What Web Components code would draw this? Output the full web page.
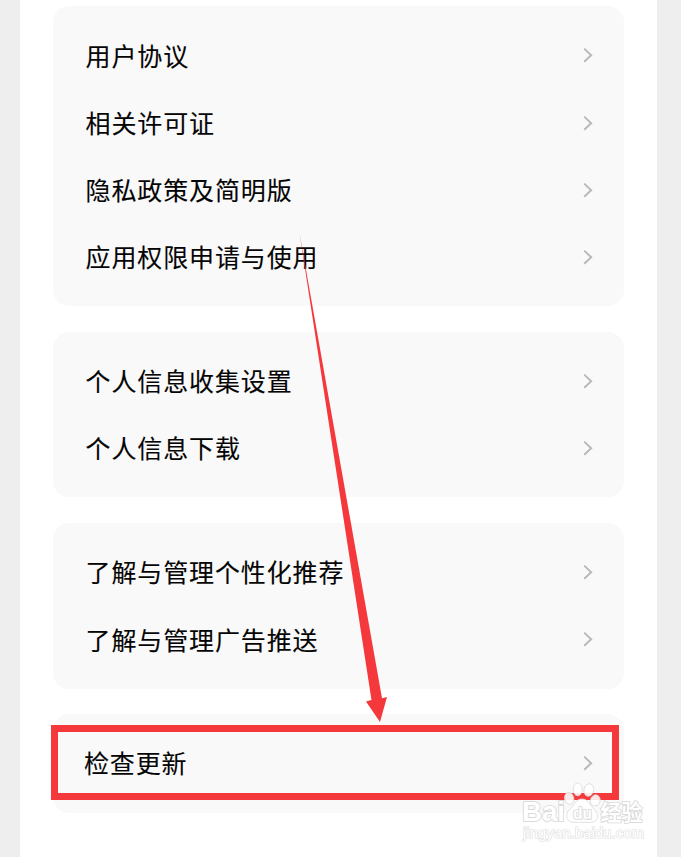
<!DOCTYPE html>
<html lang="zh-CN">
<head>
<meta charset="utf-8">
<title>设置</title>
<style>
  html, body {
    margin: 0;
    height: 857px;
    overflow: hidden;
  }
  body {
    background: #eee;
    font-family: "Noto Sans CJK SC", sans-serif;
    color: #050505;
  }
</style>
</head>
<body>
<settings-page>
  <settings-card>
    <settings-row>用户协议</settings-row>
    <settings-row>相关许可证</settings-row>
    <settings-row>隐私政策及简明版</settings-row>
    <settings-row>应用权限申请与使用</settings-row>
  </settings-card>
  <settings-card>
    <settings-row>个人信息收集设置</settings-row>
    <settings-row>个人信息下载</settings-row>
  </settings-card>
  <settings-card>
    <settings-row>了解与管理个性化推荐</settings-row>
    <settings-row>了解与管理广告推送</settings-row>
  </settings-card>
  <settings-card>
    <settings-row style="--shift: -1.7px">检查更新</settings-row>
  </settings-card>
  <guide-marks slot="overlay"></guide-marks>
  <site-mark slot="overlay"></site-mark>
</settings-page>

<script>
class SettingsPage extends HTMLElement {
  constructor() {
    super();
    this.attachShadow({mode: 'open'}).innerHTML = `
      <style>
        :host {
          display: block;
          position: relative;
          box-sizing: border-box;
          height: 857px;
          margin: 0 24px 0 20px;
          padding: 6.2px 33px 0;
          background: #fff;
        }
        .list {
          display: flex;
          flex-direction: column;
          gap: 25.4px;
        }
      </style>
      <div class="list"><slot></slot></div>
      <slot name="overlay"></slot>
    `;
  }
}

class SettingsCard extends HTMLElement {
  constructor() {
    super();
    this.attachShadow({mode: 'open'}).innerHTML = `
      <style>
        :host {
          display: block;
          padding: 15.7px 30px 15.7px 32.6px;
          border-radius: 16px;
          background: #f9f9f9;
        }
      </style>
      <slot></slot>
    `;
  }
}

class SettingsRow extends HTMLElement {
  constructor() {
    super();
    this.attachShadow({mode: 'open'}).innerHTML = `
      <style>
        :host {
          display: flex;
          align-items: center;
          justify-content: space-between;
          height: 67.2px;
          font-size: 25px;
          line-height: 36px;
          letter-spacing: 0.87px;
          white-space: nowrap;
        }
        span {
          margin: 0 0 1.6px var(--shift, 0);
          -webkit-text-stroke: 0.1px;
        }
        svg {
          display: block;
          width: 12px;
          height: 18px;
        }
      </style>
      <span><slot></slot></span>
      <svg viewBox="0 0 12 18" fill="none" stroke="#b8b8b8" stroke-width="1.9">
        <path d="M2.2 2.6 9.2 9.2 2.2 15.8"/>
      </svg>
    `;
  }
}

// red box round the last entry and the arrow that leads to it
class GuideMarks extends HTMLElement {
  constructor() {
    super();
    this.attachShadow({mode: 'open'}).innerHTML = `
      <style>
        :host {
          position: absolute;
          left: -20px;
          top: 0;
          width: 681px;
          height: 857px;
        }
        svg { display: block; }
      </style>
      <svg width="681" height="857" viewBox="0 0 681 857">
        <rect x="54.5" y="728.5" width="561" height="68" fill="none" stroke="#f5383b" stroke-width="7"/>
        <path d="M299.5 233 382 698.2 387 697 380 722 366 701.5 371.5 700Z" fill="#f5383b"/>
      </svg>
    `;
  }
}

class SiteMark extends HTMLElement {
  constructor() {
    super();
    this.attachShadow({mode: 'open'}).innerHTML = `
      <style>
        :host {
          position: absolute;
          left: 500px;
          top: 780px;
          width: 130px;
          height: 66px;
        }
        svg { display: block; }
        text {
          fill: #fff;
          stroke: #d6d6d6;
          stroke-width: 1.6px;
          paint-order: stroke;
          font-family: "Liberation Sans", "Noto Sans CJK SC", sans-serif;
        }
      </style>
      <svg width="130" height="66" viewBox="520 780 130 66">
        <g fill="#fff" fill-opacity=".88" stroke="#d9d9d9" stroke-width=".8">
          <ellipse cx="569.2" cy="798.4" rx="4.6" ry="6" transform="rotate(-12 569.2 798.4)"/>
          <ellipse cx="577.7" cy="789.4" rx="4.5" ry="6.4"/>
          <ellipse cx="588.8" cy="790" rx="4.8" ry="6.3" transform="rotate(12 588.8 790)"/>
          <ellipse cx="595.3" cy="800.4" rx="4.8" ry="5.6" transform="rotate(15 595.3 800.4)"/>
          <path d="M582 799C576 799 575 804 571 808C567 812 565.500 815 567.500 819C569.500 823.500 575 822.300 582 822.300S594.500 823.500 597 819C599 815 596.500 811.500 593 808C589 804 588 799 582 799Z"/>
        </g>
        <text x="522" y="821" font-size="27" textLength="43" lengthAdjust="spacingAndGlyphs" font-weight="700">Bai</text>
        <text x="573" y="819" font-size="16" font-weight="700" textLength="19" lengthAdjust="spacingAndGlyphs">du</text>
        <text x="600.5" y="820" font-size="21.5" font-weight="700" textLength="42" lengthAdjust="spacingAndGlyphs">经验</text>
        <text x="523" y="837.5" font-size="14" style="stroke: #e0e0e0; stroke-width: 1.2px" textLength="121" lengthAdjust="spacingAndGlyphs">jingyan.baidu.com</text>
      </svg>
    `;
  }
}

customElements.define('settings-page', SettingsPage);
customElements.define('settings-card', SettingsCard);
customElements.define('settings-row', SettingsRow);
customElements.define('guide-marks', GuideMarks);
customElements.define('site-mark', SiteMark);
</script>
</body>
</html>
